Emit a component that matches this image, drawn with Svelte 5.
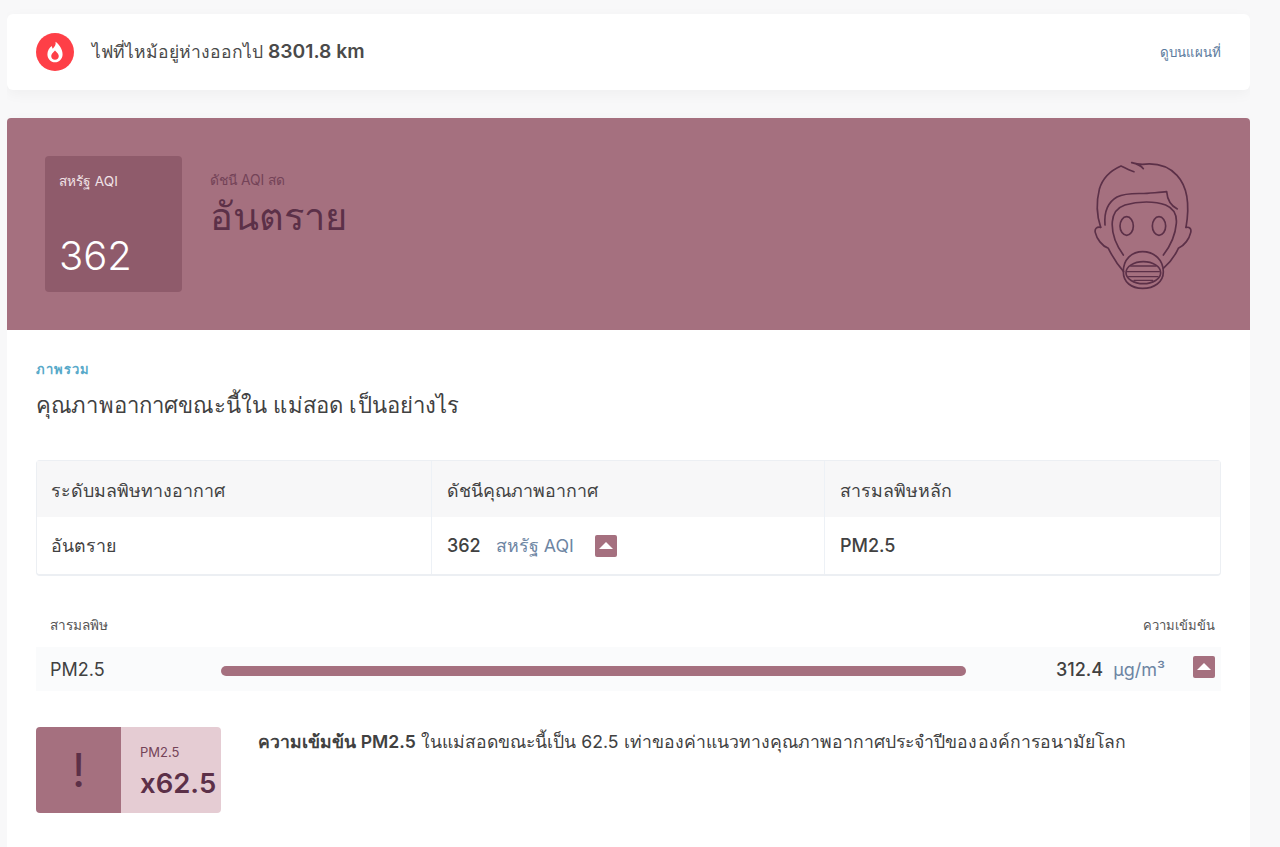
<script>
  const columns = ['ระดับมลพิษทางอากาศ', 'ดัชนีคุณภาพอากาศ', 'สารมลพิษหลัก'];
</script>

<div class="page">
  <section class="fire-card">
    <div class="fire-info">
      <span class="fire-icon">
        <svg viewBox="0 0 24 24" width="26" height="26">
          <path fill="#fff" fill-rule="evenodd" d="M12.5 2.500c.6 3-1 4.600-2.600 6.400-.5-.8-.8-1.500-.9-2.400C6.700 8.300 5 10.900 5 14c0 4.300 3.100 7.500 7 7.500s7-3.200 7-7.500c0-4.800-3.300-9-6.500-11.500zM12 19.200c-2 0-3.500-1.500-3.500-3.500 0-2 1.700-3.200 3.500-5.200 1.800 2 3.500 3.200 3.500 5.200 0 2-1.500 3.500-3.500 3.500z"/>
        </svg>
      </span>
      <span class="fire-text">ไฟที่ไหม้อยู่ห่างออกไป <b>8301.8 km</b></span>
    </div>
    <span class="fire-link">ดูบนแผนที่</span>
  </section>

  <section class="main-card">
    <header class="hero">
      <div class="aqi-box">
        <span class="aqi-label">สหรัฐ AQI</span>
        <span class="aqi-value">362</span>
      </div>
      <div class="hero-status">
        <span class="status-label">ดัชนี AQI สด</span>
        <span class="status-value">อันตราย</span>
      </div>
      <svg class="mask" viewBox="0 0 480 480" width="160" height="160" fill="none" stroke="#5c3048" stroke-width="5" stroke-linecap="round" stroke-linejoin="round">
        <path d="M222 95c-12-4-25-10-39-17-32 14-56 38-65 70-9 36-8 78 4 114"/>
        <path d="M250 86c-6-8-18-14-35-18 10 3 22 5 32 5 40-5 78 5 104 33 28 30 40 80 27 156"/>
        <path d="M135 255c-3-36 8-68 36-84 28-14 62-9 90-11 22-2 42-2 59-5 2 24 12 42 32 52"/>
        <path d="M190 345c-22-30-36-62-33-100 2-24 14-42 38-50 40-12 90-12 122 0 24 10 34 30 32 55-3 36-18 68-39 95"/>
        <ellipse cx="200" cy="258" rx="20" ry="28"/>
        <ellipse cx="297" cy="258" rx="20" ry="28"/>
        <path d="M122 262c-12-2-19 4-16 16 4 18 20 40 39 47 12 24 28 50 46 70"/>
        <path d="M378 262c11-2 17 5 14 16-4 18-18 38-37 47-10 22-26 44-45 60"/>
        <path d="M190 395c0-36 24-60 58-60 36 0 62 26 62 60 0 32-28 50-62 50-34 0-58-18-58-50z"/>
        <ellipse cx="250" cy="398" rx="52" ry="33"/>
        <path d="M212 378h76M202 395h96M206 410h88M222 421h56" stroke-width="4"/>
      </svg>
    </header>

    <div class="content">
      <span class="eyebrow">ภาพรวม</span>
      <h2>คุณภาพอากาศขณะนี้ใน แม่สอด เป็นอย่างไร</h2>

      <div class="summary">
        <div class="summary-head">
          {#each columns as col}
            <div class="cell">{col}</div>
          {/each}
        </div>
        <div class="summary-row">
          <div class="cell">อันตราย</div>
          <div class="cell">
            <span class="num">362</span>
            <span class="unit">สหรัฐ AQI</span>
            <span class="trend"></span>
          </div>
          <div class="cell"><span class="num">PM2.5</span></div>
        </div>
      </div>

      <div class="pollutant-labels">
        <span class="label-name">สารมลพิษ</span>
        <span>ความเข้มข้น</span>
      </div>
      <div class="pollutant-row">
        <span class="pollutant-name">PM2.5</span>
        <div class="bar"></div>
        <span class="pollutant-value">312.4</span>
        <span class="unit">µg/m³</span>
        <span class="trend"></span>
      </div>

      <div class="advice">
        <div class="multiplier">
          <div class="mark">!</div>
          <div class="factor">
            <span class="factor-label">PM2.5</span>
            <span class="factor-value">x62.5</span>
          </div>
        </div>
        <p><b>ความเข้มข้น PM2.5</b> ในแม่สอดขณะนี้เป็น 62.5 เท่าของค่าแนวทางคุณภาพอากาศประจำปีขององค์การอนามัยโลก</p>
      </div>
    </div>
  </section>
</div>

<style>
  :global(body) {
    margin: 0;
    background: #f8f8f9;
    font-family: Inter, "Noto Sans", "Liberation Sans", sans-serif;
    color: #414141;
  }

  .page {
    width: 1243px;
    height: 847px;
    overflow: hidden;
    margin-left: 7px;
    padding-top: 14px;
    box-sizing: border-box;
    display: flex;
    flex-direction: column;
    gap: 28px;
  }

  /* fire banner */

  .fire-card {
    flex: none;
    height: 76px;
    box-sizing: border-box;
    padding: 0 29px;
    display: flex;
    align-items: center;
    justify-content: space-between;
    background: #fff;
    border-radius: 6px;
    box-shadow: 0 4px 14px rgba(0, 0, 0, 0.04);
  }

  .fire-info {
    display: flex;
    align-items: center;
    gap: 18px;
  }

  .fire-icon {
    width: 38px;
    height: 38px;
    border-radius: 50%;
    background: #fe3f47;
    display: flex;
    align-items: center;
    justify-content: center;
  }

  .fire-text {
    font-size: 17.5px;
    color: #4a4a4a;
  }

  .fire-text b {
    font-size: 19.3px;
    font-weight: 600;
  }

  .fire-link {
    font-size: 13.3px;
    color: #5b7a9d;
  }

  /* hero */

  .main-card {
    flex: 1;
    background: #fff;
    border-radius: 4px 4px 0 0;
    box-shadow: 0 4px 14px rgba(0, 0, 0, 0.04);
  }

  .hero {
    height: 212px;
    box-sizing: border-box;
    padding: 38px 30px 0 38px;
    display: flex;
    align-items: flex-start;
    background: #a5707f;
    border-radius: 4px 4px 0 0;
  }

  .aqi-box {
    width: 137px;
    height: 136px;
    box-sizing: border-box;
    padding: 14px 14px 13px;
    display: flex;
    flex-direction: column;
    justify-content: space-between;
    background: #8f5b6b;
    border-radius: 4px;
    color: #fff;
  }

  .aqi-label {
    font-size: 13.6px;
    color: #f0e2e6;
  }

  .aqi-value {
    font-size: 40px;
    line-height: 46px;
    font-weight: 300;
  }

  .hero-status {
    flex: 1;
    margin-left: 28px;
    padding-top: 16px;
    display: flex;
    flex-direction: column;
    color: #5c3048;
  }

  .status-label {
    font-size: 13.8px;
    line-height: 16px;
    color: #744358;
  }

  .status-value {
    margin-top: 6px;
    font-size: 38px;
    line-height: 44px;
  }

  .mask {
    margin-top: -16px;
  }

  /* body */

  .content {
    padding: 30px 29px 0;
  }

  .eyebrow {
    display: block;
    font-size: 13px;
    line-height: 18px;
    font-weight: 600;
    letter-spacing: 1px;
    color: #57a9c9;
  }

  h2 {
    margin: 10px 0 0;
    font-size: 22.1px;
    line-height: 34px;
    font-weight: 400;
    letter-spacing: 0.13px;
    color: #414141;
  }

  .summary {
    margin-top: 38px;
    border: 1px solid #eceff3;
    border-bottom-width: 2px;
    border-radius: 4px;
    font-size: 17.8px;
  }

  .summary-head,
  .summary-row {
    display: grid;
    grid-template-columns: 394px 393px 1fr;
  }

  .summary-head {
    height: 56px;
    background: #f7f7f8;
  }

  .summary-head .cell {
    padding-top: 3px;
  }

  .summary-row {
    height: 57px;
  }

  .cell {
    display: flex;
    align-items: center;
    padding-left: 15px;
    border-left: 1px solid #edf1f6;
  }

  .cell:first-child {
    border-left: 0;
    padding-left: 14px;
  }

  .num {
    font-size: 18px;
    font-weight: 500;
  }

  .unit {
    margin-left: 15px;
    color: #6d85a3;
    font-size: 17.8px;
  }

  .trend {
    position: relative;
    width: 22px;
    height: 22px;
    margin-left: 21px;
    background: #a5707f;
    border-radius: 2px;
  }

  .trend::after {
    content: '';
    position: absolute;
    left: 4px;
    top: 7px;
    border-left: 7px solid transparent;
    border-right: 7px solid transparent;
    border-bottom: 7px solid #fff;
  }

  .pollutant-labels {
    margin-top: 40px;
    padding: 0 6px 0 14px;
    display: flex;
    justify-content: space-between;
    font-size: 13px;
    line-height: 18px;
    color: #555;
  }

  .label-name {
    font-size: 13.6px;
  }

  .pollutant-row {
    margin-top: 13px;
    height: 44px;
    padding: 0 6px 0 14px;
    display: flex;
    align-items: center;
    background: #fafbfc;
    font-size: 18px;
  }

  .pollutant-name {
    width: 171px;
    flex: none;
  }

  .bar {
    width: 745px;
    height: 10px;
    margin-top: 4px;
    flex: none;
    background: #a5707f;
    border-radius: 5px;
  }

  .pollutant-value {
    margin-left: auto;
    font-weight: 500;
  }

  .pollutant-row .unit {
    margin-left: 10px;
    font-size: 18px;
  }

  .pollutant-row .trend {
    margin-left: 28px;
    margin-top: -4px;
  }

  .advice {
    margin-top: 36px;
    display: flex;
    gap: 37px;
  }

  .multiplier {
    flex: none;
    width: 185px;
    height: 86px;
    display: flex;
    border-radius: 4px;
    overflow: hidden;
  }

  .mark {
    width: 85px;
    display: flex;
    align-items: center;
    justify-content: center;
    background: #a5707f;
    color: #5c3048;
    font-size: 46px;
    font-weight: 400;
  }

  .factor {
    flex: 1;
    padding: 16px 0 0 19px;
    display: flex;
    flex-direction: column;
    background: #e5ccd3;
    color: #5c3048;
  }

  .factor-label {
    font-size: 13px;
    line-height: 18px;
    color: #744358;
  }

  .factor-value {
    margin-top: 5px;
    font-size: 27.5px;
    line-height: 34px;
    font-weight: 600;
  }

  .advice p {
    margin: 0;
    font-size: 17.6px;
    line-height: 30px;
    letter-spacing: 0.03px;
    color: #414141;
  }

  .advice b {
    font-weight: 600;
  }
</style>
